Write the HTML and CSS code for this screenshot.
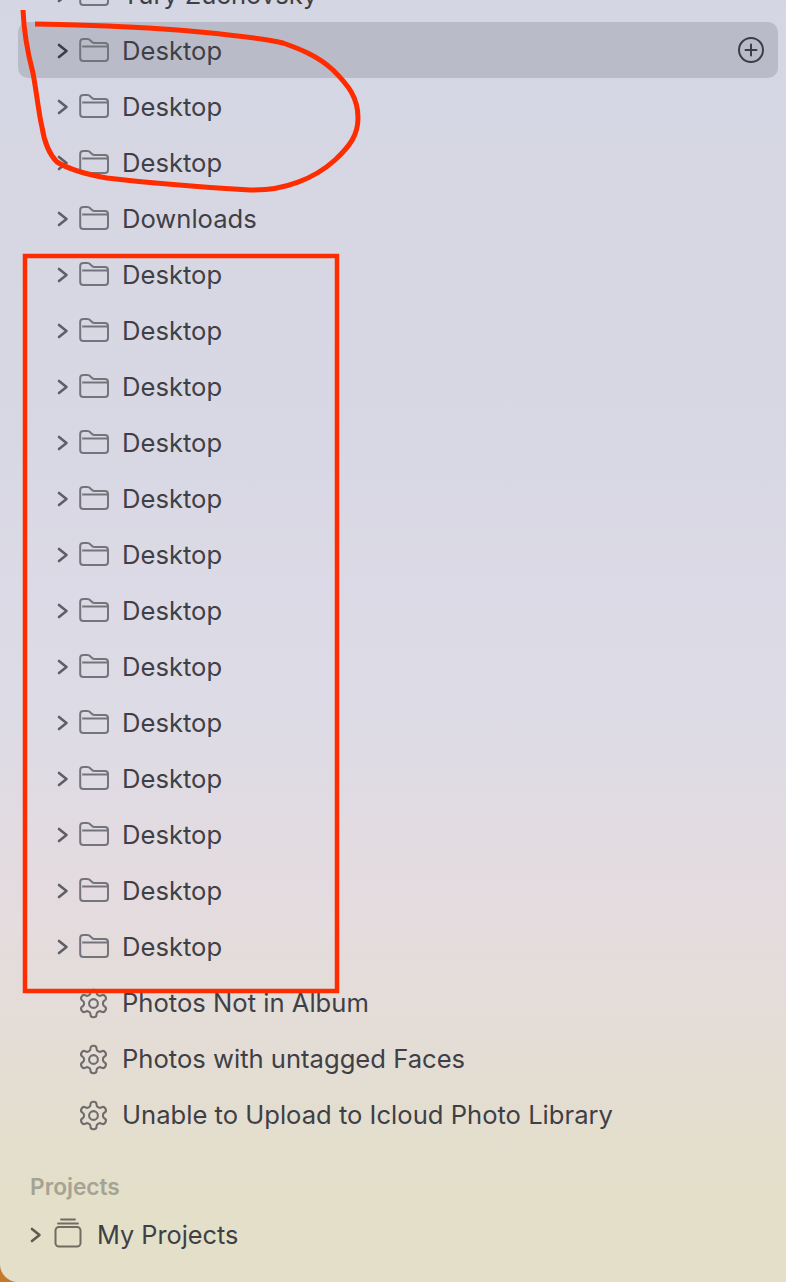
FILE: index.html
```html
<!DOCTYPE html>
<html lang="en">
<head>
    <meta charset="UTF-8">
    <title>Photos sidebar</title>
    <link rel="stylesheet" href="styles.css">
</head>
<body>

<svg class="defs" width="0" height="0">
    <symbol id="chev" viewBox="0 0 12 16">
        <path d="M2 2l7.500 6L2 14" fill="none" stroke="currentColor" stroke-width="2.600" stroke-linecap="round" stroke-linejoin="round"/>
    </symbol>
    <symbol id="folder" viewBox="0 0 30 25">
        <path d="M3.200 9.500H28.500M4.200 24H26a3 3 0 0 0 3-3V9a3 3 0 0 0-3-3H15.500c-1.300 0-1.900-.4-2.800-1.300L11.500 3.500C10.600 2.500 10 2 8.500 2H4.200a3 3 0 0 0-3 3v16a3 3 0 0 0 3 3z" fill="none" stroke="currentColor" stroke-width="2"/>
    </symbol>
    <symbol id="gear" viewBox="0 0 24 24">
        <path d="M12.220 2h-.44a2 2 0 0 0-2 2v.18a2 2 0 0 1-1 1.730l-.43.250a2 2 0 0 1-2 0l-.15-.08a2 2 0 0 0-2.730.730l-.22.380a2 2 0 0 0 .730 2.730l.15.1a2 2 0 0 1 1 1.720v.51a2 2 0 0 1-1 1.740l-.15.09a2 2 0 0 0-.730 2.730l.22.380a2 2 0 0 0 2.730.730l.15-.08a2 2 0 0 1 2 0l.43.250a2 2 0 0 1 1 1.730V20a2 2 0 0 0 2 2h.44a2 2 0 0 0 2-2v-.18a2 2 0 0 1 1-1.730l.43-.250a2 2 0 0 1 2 0l.15.08a2 2 0 0 0 2.730-.730l.22-.390a2 2 0 0 0-.730-2.730l-.15-.08a2 2 0 0 1-1-1.740v-.5a2 2 0 0 1 1-1.740l.15-.09a2 2 0 0 0 .730-2.730l-.22-.380a2 2 0 0 0-2.730-.730l-.15.08a2 2 0 0 1-2 0l-.43-.250a2 2 0 0 1-1-1.730V4a2 2 0 0 0-2-2z" fill="none" stroke="currentColor" stroke-width="1.500"/>
        <circle cx="12" cy="12" r="3.200" fill="none" stroke="currentColor" stroke-width="1.500"/>
    </symbol>
</svg>

<div class="sidebar">
    <div class="list">
        <div class="row"><svg class="chev"><use href="#chev"/></svg><svg class="folder"><use href="#folder"/></svg><span>Yury Zuchovsky</span></div>
        <div class="row selected">
            <svg class="chev"><use href="#chev"/></svg><svg class="folder"><use href="#folder"/></svg><span>Desktop</span>
            <svg class="add" viewBox="0 0 28 28"><circle cx="14" cy="14" r="12" fill="none" stroke="currentColor" stroke-width="2"/><path d="M14 8.500v11M8.500 14h11" fill="none" stroke="currentColor" stroke-width="2" stroke-linecap="round"/></svg>
        </div>
        <div class="row"><svg class="chev"><use href="#chev"/></svg><svg class="folder"><use href="#folder"/></svg><span>Desktop</span></div>
        <div class="row"><svg class="chev"><use href="#chev"/></svg><svg class="folder"><use href="#folder"/></svg><span>Desktop</span></div>
        <div class="row"><svg class="chev"><use href="#chev"/></svg><svg class="folder"><use href="#folder"/></svg><span>Downloads</span></div>
        <div class="row"><svg class="chev"><use href="#chev"/></svg><svg class="folder"><use href="#folder"/></svg><span>Desktop</span></div>
        <div class="row"><svg class="chev"><use href="#chev"/></svg><svg class="folder"><use href="#folder"/></svg><span>Desktop</span></div>
        <div class="row"><svg class="chev"><use href="#chev"/></svg><svg class="folder"><use href="#folder"/></svg><span>Desktop</span></div>
        <div class="row"><svg class="chev"><use href="#chev"/></svg><svg class="folder"><use href="#folder"/></svg><span>Desktop</span></div>
        <div class="row"><svg class="chev"><use href="#chev"/></svg><svg class="folder"><use href="#folder"/></svg><span>Desktop</span></div>
        <div class="row"><svg class="chev"><use href="#chev"/></svg><svg class="folder"><use href="#folder"/></svg><span>Desktop</span></div>
        <div class="row"><svg class="chev"><use href="#chev"/></svg><svg class="folder"><use href="#folder"/></svg><span>Desktop</span></div>
        <div class="row"><svg class="chev"><use href="#chev"/></svg><svg class="folder"><use href="#folder"/></svg><span>Desktop</span></div>
        <div class="row"><svg class="chev"><use href="#chev"/></svg><svg class="folder"><use href="#folder"/></svg><span>Desktop</span></div>
        <div class="row"><svg class="chev"><use href="#chev"/></svg><svg class="folder"><use href="#folder"/></svg><span>Desktop</span></div>
        <div class="row"><svg class="chev"><use href="#chev"/></svg><svg class="folder"><use href="#folder"/></svg><span>Desktop</span></div>
        <div class="row"><svg class="chev"><use href="#chev"/></svg><svg class="folder"><use href="#folder"/></svg><span>Desktop</span></div>
        <div class="row"><svg class="chev"><use href="#chev"/></svg><svg class="folder"><use href="#folder"/></svg><span>Desktop</span></div>
        <div class="row no-chev"><svg class="gear"><use href="#gear"/></svg><span>Photos Not in Album</span></div>
        <div class="row no-chev"><svg class="gear"><use href="#gear"/></svg><span>Photos with untagged Faces</span></div>
        <div class="row no-chev"><svg class="gear"><use href="#gear"/></svg><span>Unable to Upload to Icloud Photo Library</span></div>
    </div>

    <h3 class="section">Projects</h3>
    <div class="row top-level">
        <svg class="chev"><use href="#chev"/></svg>
        <svg class="stack" viewBox="0 0 28 30"><path d="M7 1.500h14M4 5.500h20" fill="none" stroke="currentColor" stroke-width="1.800" stroke-linecap="round"/><rect x="1.500" y="9" width="25" height="19.500" rx="3.500" fill="none" stroke="currentColor" stroke-width="2"/></svg>
        <span>My Projects</span>
    </div>

    <!-- markup drawn on top of the screenshot -->
    <svg class="scribble" viewBox="0 0 786 1282">
        <path d="M23 10C24 35 29 58 33 73C37 95 39 115 42 127C44 140 48 153 57 162C70 170 90 175 107 178C150 183 200 187 250 190C285 191 315 178 335 160C350 146 358 135 358 118C358 97 348 85 333 70C318 56 300 49 283 43C262 38 232 35 200 32C150 27 90 25 35 24" fill="none" stroke="#ff2c00" stroke-width="5" stroke-linecap="butt" stroke-linejoin="round"/>
        <rect x="25" y="256" width="312" height="735" fill="none" stroke="#ff2c00" stroke-width="4.500"/>
    </svg>
</div>

</body>
</html>
```

FILE: styles.css
```css
html, body {
    margin: 0;
    height: 100%;
}

body {
    background-color: #c57a2b;
    overflow: hidden;
    font-family: Inter, "Noto Sans", sans-serif;
}

.defs {
    display: block;
    height: 0;
}

.sidebar {
    position: relative;
    height: 1282px;
    overflow: hidden;
    border-bottom-left-radius: 18px;
    background: linear-gradient(180deg, #d5d6e3 0%, #d8d8e4 35%, #dddbe6 55%, #e3dbe0 68%, #e4dcdc 74%, #e3ddd3 84%, #e3dfc9 93%, #e3dfc8 100%);
}

.list {
    margin-top: -34px;
}

.row {
    display: flex;
    align-items: center;
    height: 56px;
    margin: 0 8px 0 18px;
    padding-left: 38px;
    border-radius: 10px;
    font-size: 25.6px;
    color: #3f3f46;
}

.row span {
    padding-top: 1px;
    white-space: nowrap;
}

.selected {
    background-color: #babbc8;
}

.chev {
    width: 12px;
    height: 16px;
    margin-left: 1px;
    margin-right: 10px;
    margin-top: 2px;
    color: #5f5f68;
    flex: none;
}

.selected .chev {
    color: #3d3d47;
}

.folder {
    width: 30px;
    height: 25px;
    margin-right: 13px;
    margin-top: -2px;
    color: #74747c;
    flex: none;
}

.no-chev {
    padding-left: 59px;
}

.gear {
    width: 33px;
    height: 33px;
    margin-right: 12px;
    margin-top: 2px;
    color: #6e6c6c;
    flex: none;
}

.add {
    width: 28px;
    height: 28px;
    margin-left: auto;
    margin-right: 13px;
    color: #3d3d47;
}

.section {
    margin: 0;
    padding: 32px 0 6px 30px;
    font-size: 22.700px;
    line-height: 26px;
    font-weight: 600;
    color: #a5a393;
}

.top-level {
    padding-left: 12px;
    font-size: 25.300px;
}

.top-level .chev {
    color: #5e5c4e;
    margin-left: 0;
    margin-right: 12px;
}

.stack {
    width: 28px;
    height: 30px;
    margin-right: 15px;
    margin-top: -2px;
    color: #6f6d62;
    flex: none;
}

.scribble {
    position: absolute;
    left: 0;
    top: 0;
    width: 786px;
    height: 1282px;
    pointer-events: none;
}
```
